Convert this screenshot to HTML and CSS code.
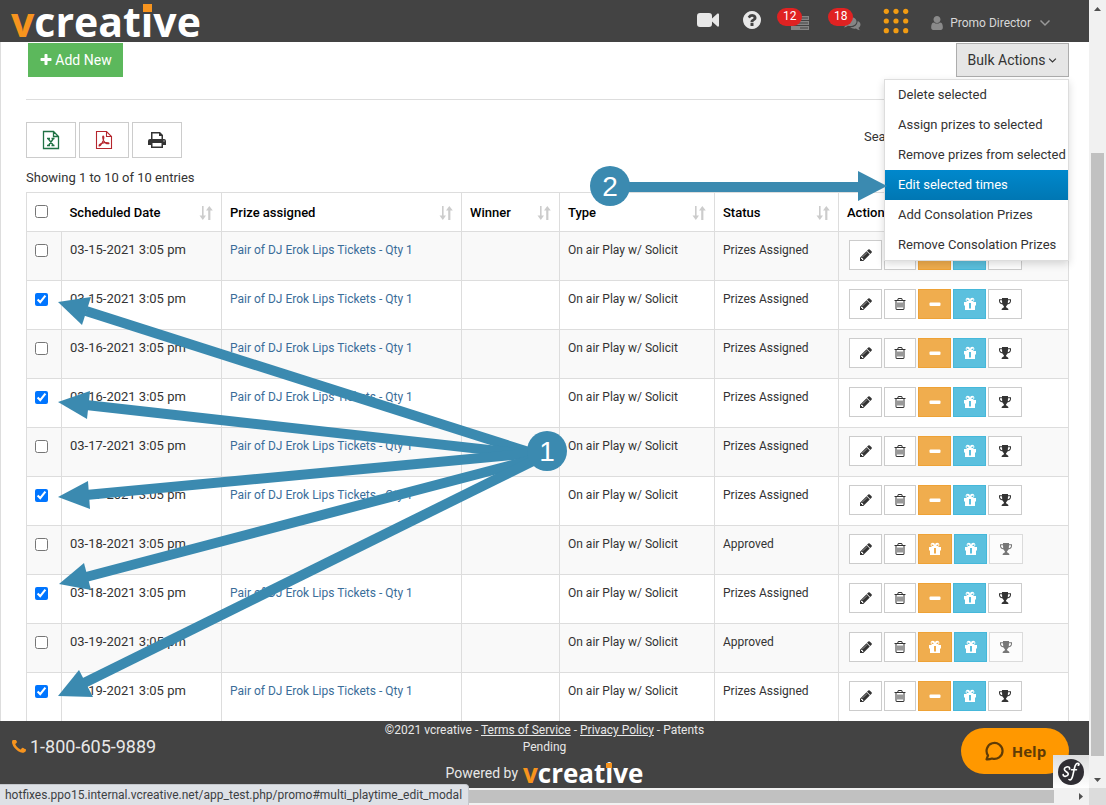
FILE: index.html
```html
<!DOCTYPE html>
<html lang="en">
<head>
<meta charset="utf-8">
<title>vcreative - Promo</title>
<link rel="stylesheet" href="styles.css">
</head>
<body>
<svg class="defs" aria-hidden="true">
<symbol id="plus" viewBox="0 0 1792 1792"><path d="M1600 736v192q0 40-28 68t-68 28h-416v416q0 40-28 68t-68 28h-192q-40 0-68-28t-28-68v-416h-416q-40 0-68-28t-28-68v-192q0-40 28-68t68-28h416v-416q0-40 28-68t68-28h192q40 0 68 28t28 68v416h416q40 0 68 28t28 68z"/></symbol>
<symbol id="pencil" viewBox="0 0 1792 1792"><path d="M491 1536l91-91-235-235-91 91v107h128v128h107zm523-928q0-22-22-22-10 0-17 7l-542 542q-7 7-7 17 0 22 22 22 10 0 17-7l542-542q7-7 7-17zm-54-192l416 416-832 832h-416v-416zm683 96q0 53-37 90l-166 166-416-416 166-165q36-38 90-38 53 0 91 38l235 234q37 39 37 91z"/></symbol>
<symbol id="trash" viewBox="0 0 1792 1792"><path d="M704 736v576q0 14-9 23t-23 9h-64q-14 0-23-9t-9-23v-576q0-14 9-23t23-9h64q14 0 23 9t9 23zm256 0v576q0 14-9 23t-23 9h-64q-14 0-23-9t-9-23v-576q0-14 9-23t23-9h64q14 0 23 9t9 23zm256 0v576q0 14-9 23t-23 9h-64q-14 0-23-9t-9-23v-576q0-14 9-23t23-9h64q14 0 23 9t9 23zm128 724v-948h-896v948q0 22 7 40.5t14.5 27 10.5 8.5h832q3 0 10.5-8.5t14.5-27 7-40.5zm-672-1076h448l-48-117q-7-9-17-11h-317q-10 2-17 11zm928 32v64q0 14-9 23t-23 9h-96v948q0 83-47 143.5t-113 60.5h-832q-66 0-113-58.5t-47-141.5v-952h-96q-14 0-23-9t-9-23v-64q0-14 9-23t23-9h309l70-167q15-37 54-63t79-26h320q40 0 79 26t54 63l70 167h309q14 0 23 9t9 23z"/></symbol>
<symbol id="minus" viewBox="0 0 14 14"><rect x="1.500" y="5.500" width="11" height="3.500" rx="1"/></symbol>
<symbol id="gift" viewBox="0 0 14 14"><path fill-rule="evenodd" d="M1 5h3.200A2.200 2.200 0 1 1 7 2.700 2.200 2.200 0 1 1 9.800 5H13v3.500h-1V13H2V8.500H1zM4 2.200a1 1 0 0 0 0 1.700h2zM10 2.200L8 3.900h2a1 1 0 0 0 0-1.700zM6 6v5.500h2V6z"/></symbol>
<symbol id="trophy" viewBox="0 0 14 14"><path fill-rule="evenodd" d="M4 1h6v1.200h3V4c0 2-1.600 3.200-3.600 3.500C9 8.600 8 9 8 10c0 .8 2.500 1 2.500 3h-7c0-2 2.500-2.200 2.500-3 0-1-1-1.400-1.400-2.500C2.600 7.200 1 6 1 4V2.200h3zM2 3.200V4c0 1 .9 1.900 2.200 2.300L4 3.200zM10 3.200l-.2 3.100C11.100 5.900 12 5 12 4v-.8z"/></symbol>
<symbol id="sort" viewBox="0 0 14 14"><path d="M3 0h1.600v9.500H7L3.800 14 .5 9.500H3zM9.200 14V4.500H7L10.300 0 13.800 4.500h-2.400V14z"/></symbol>
<symbol id="chevron" viewBox="0 0 12 8"><path d="M1.500 1.500L6 6l4.500-4.500" fill="none" stroke="currentColor" stroke-width="1.500"/></symbol>
</svg>

<div class="window">
<div class="page">
<header class="topbar">
<a class="logo" href="#"><span class="logo-v">v</span>creat<span class="logo-i">i</span>ve</a>
<nav class="topnav">
<a href="#" class="nav-video" aria-label="Videos"><svg viewBox="0 0 22 16"><path d="M3 1h9a3 3 0 0 1 3 3v2.500L20.500 1.500q1.500-.5 1.500 1v11q0 1.500-1.500 1L15 9.500V12a3 3 0 0 1-3 3H3a3 3 0 0 1-3-3V4a3 3 0 0 1 3-3z"/></svg></a>
<a href="#" class="nav-help" aria-label="Help"><svg viewBox="128 128 1536 1536"><path d="M1024 1376v-192q0-14-9-23t-23-9h-192q-14 0-23 9t-9 23v192q0 14 9 23t23 9h192q14 0 23-9t9-23zm256-672q0-88-55.500-163t-138.500-116-170-41q-243 0-371 213-15 24 8 42l132 100q7 6 19 6 16 0 25-12 53-68 86-92 34-24 86-24 48 0 85.500 26t37.500 59q0 38-20 61t-68 45q-63 28-115.500 86.500t-52.500 125.500v36q0 14 9 23t23 9h192q14 0 23-9t9-23q0-19 21.500-49.500t54.500-49.500q32-18 49-28.500t46-35 44.500-48 28-60.500 12.500-81zm384 192q0 209-103 385.500t-279.500 279.500-385.500 103-385.500-103-279.500-279.500-103-385.500 103-385.500 279.500-279.500 385.500-103 385.500 103 279.500 279.500 103 385.500z"/></svg></a>
<a href="#" class="nav-tasks" aria-label="Tasks, 12 pending"><svg viewBox="0 0 20 16"><path fill-rule="evenodd" d="M1 1h18v4H1zM11 2.400v1.200h7V2.400zM1 6h18v4H1zM8 7.400v1.200h10V7.400zM1 11h18v4H1zM10 12.400v1.200h8v-1.200z"/></svg><span class="badge">12</span></a>
<a href="#" class="nav-chat" aria-label="Messages, 18 unread"><svg viewBox="0 0 18 15"><path d="M7 1c4 0 6.500 2 6.500 4.500S11 10 7 10q-1 0-2-.2Q3 11.500.8 11.500 2.300 10.300 2.400 8.800.5 7.500.5 5.500.5 3 7 1z"/><path d="M14.800 5c1.700.8 2.700 2 2.700 3.500s-.8 2.500-2 3.300q.3 1.500 1.800 2.500-2.600 0-4.300-1.700-3.500.5-6-1.300 7 0 7.800-6.300z"/></svg><span class="badge">18</span></a>
<a href="#" class="nav-apps" aria-label="Apps"><svg viewBox="0 0 26 26"><circle cx="3.300" cy="3.300" r="2.600"/><circle cx="13" cy="3.300" r="2.600"/><circle cx="22.700" cy="3.300" r="2.600"/><circle cx="3.300" cy="13" r="2.600"/><circle cx="13" cy="13" r="2.600"/><circle cx="22.700" cy="13" r="2.600"/><circle cx="3.300" cy="22.700" r="2.600"/><circle cx="13" cy="22.700" r="2.600"/><circle cx="22.700" cy="22.700" r="2.600"/></svg></a>
<a href="#" class="nav-user"><svg class="user-icon" viewBox="256 128 1280 1536"><path d="M1536 1399q0 109-62.500 187t-150.500 78h-854q-88 0-150.500-78t-62.500-187q0-85 8.500-160.500t31.500-152 58.500-131 94-89 134.500-34.500q131 128 313 128t313-128q76 0 134.500 34.500t94 89 58.500 131 31.500 152 8.500 160.500zm-256-887q0 159-112.500 271.500t-271.500 112.500-271.500-112.500-112.500-271.500 112.500-271.500 271.500-112.500 271.500 112.500 112.500 271.500z"/></svg><span>Promo Director</span><svg class="chev"><use href="#chevron"/></svg></a>
</nav>
</header>

<main class="content">
<div class="toolbar">
<button class="add" type="button"><svg><use href="#plus"/></svg>Add New</button>
<div class="bulk">
<button class="bulk-toggle" type="button" aria-expanded="true">Bulk Actions<svg><use href="#chevron"/></svg></button>
<ul class="menu">
<li><a href="#">Delete selected</a></li>
<li><a href="#">Assign prizes to selected</a></li>
<li><a href="#">Remove prizes from selected</a></li>
<li><a href="#multi_playtime_edit_modal" class="current">Edit selected times</a></li>
<li><a href="#">Add Consolation Prizes</a></li>
<li><a href="#">Remove Consolation Prizes</a></li>
</ul>
</div>
</div>
<div class="tools">
<div class="exports">
<button type="button" class="excel" aria-label="Export to Excel"><svg viewBox="0 0 18 20"><path d="M1.500 1.500h10l5 5v12h-15zM11.500 1.500v5h5M5 8.500h3M9.500 8.500h3M5 15.500h3M9.500 15.500h3M6 8.500l5.500 7M11.500 8.500l-5 7" fill="none" stroke="currentColor" stroke-width="1.300"/></svg></button>
<button type="button" class="pdf" aria-label="Export to PDF"><svg viewBox="0 0 18 20"><path d="M1.500 1.500h10l5 5v12h-15zM11.500 1.500v5h5M8.200 6c-.8 0-.6 2.500.3 4.500 1 2 2.800 3.500 5 3.300 1.500-.6-1-1.600-4-1.200-2.500.3-5.800 1.700-5.500 3.200.8 1 2.800-2 4-4.800C9 8.500 9 6.500 8.200 6z" fill="none" stroke="currentColor" stroke-width="1.100"/></svg></button>
<button type="button" aria-label="Print"><svg viewBox="0 0 18 18"><path fill-rule="evenodd" d="M3 1h9l3 3v4h1q2 0 2 2v4h-3v3H3v-3H0v-4q0-2 2-2h1zM4.500 2.500V8h9V5H11V2.500zM4.500 12v3.500h9V12zM15.500 9.500v1h1v-1z"/></svg></button>
</div>
<label class="search">Search:<input type="search"></label>
</div>
<p class="info">Showing 1 to 10 of 10 entries</p>

<table>
<colgroup><col class="c-check"><col class="c-date"><col class="c-prize"><col class="c-winner"><col class="c-type"><col class="c-status"><col></colgroup>
<thead>
<tr>
<th class="select"><input type="checkbox" aria-label="Select all"></th>
<th class="date"><div>Scheduled Date<svg><use href="#sort"/></svg></div></th>
<th><div>Prize assigned<svg><use href="#sort"/></svg></div></th>
<th><div>Winner<svg><use href="#sort"/></svg></div></th>
<th><div>Type<svg><use href="#sort"/></svg></div></th>
<th><div>Status<svg><use href="#sort"/></svg></div></th>
<th>Actions</th>
</tr>
</thead>
<tbody>
<tr><td class="select"><input type="checkbox" aria-label="Select row 1"></td><td>03-15-2021 3:05 pm</td><td><a href="#">Pair of DJ Erok Lips Tickets - Qty 1</a></td><td></td><td>On air Play w/ Solicit</td><td>Prizes Assigned</td>
<td><div class="actions"><button aria-label="Edit"><svg><use href="#pencil"/></svg></button><button class="del" aria-label="Delete"><svg><use href="#trash"/></svg></button><button class="warn" aria-label="Remove prize"><svg><use href="#minus"/></svg></button><button class="gift" aria-label="Consolation prize"><svg><use href="#gift"/></svg></button><button class="win" aria-label="Winner"><svg><use href="#trophy"/></svg></button></div></td></tr>
<tr><td class="select"><input type="checkbox" checked aria-label="Select row 2"></td><td>03-15-2021 3:05 pm</td><td><a href="#">Pair of DJ Erok Lips Tickets - Qty 1</a></td><td></td><td>On air Play w/ Solicit</td><td>Prizes Assigned</td>
<td><div class="actions"><button aria-label="Edit"><svg><use href="#pencil"/></svg></button><button class="del" aria-label="Delete"><svg><use href="#trash"/></svg></button><button class="warn" aria-label="Remove prize"><svg><use href="#minus"/></svg></button><button class="gift" aria-label="Consolation prize"><svg><use href="#gift"/></svg></button><button class="win" aria-label="Winner"><svg><use href="#trophy"/></svg></button></div></td></tr>
<tr><td class="select"><input type="checkbox" aria-label="Select row 3"></td><td>03-16-2021 3:05 pm</td><td><a href="#">Pair of DJ Erok Lips Tickets - Qty 1</a></td><td></td><td>On air Play w/ Solicit</td><td>Prizes Assigned</td>
<td><div class="actions"><button aria-label="Edit"><svg><use href="#pencil"/></svg></button><button class="del" aria-label="Delete"><svg><use href="#trash"/></svg></button><button class="warn" aria-label="Remove prize"><svg><use href="#minus"/></svg></button><button class="gift" aria-label="Consolation prize"><svg><use href="#gift"/></svg></button><button class="win" aria-label="Winner"><svg><use href="#trophy"/></svg></button></div></td></tr>
<tr><td class="select"><input type="checkbox" checked aria-label="Select row 4"></td><td>03-16-2021 3:05 pm</td><td><a href="#">Pair of DJ Erok Lips Tickets - Qty 1</a></td><td></td><td>On air Play w/ Solicit</td><td>Prizes Assigned</td>
<td><div class="actions"><button aria-label="Edit"><svg><use href="#pencil"/></svg></button><button class="del" aria-label="Delete"><svg><use href="#trash"/></svg></button><button class="warn" aria-label="Remove prize"><svg><use href="#minus"/></svg></button><button class="gift" aria-label="Consolation prize"><svg><use href="#gift"/></svg></button><button class="win" aria-label="Winner"><svg><use href="#trophy"/></svg></button></div></td></tr>
<tr><td class="select"><input type="checkbox" aria-label="Select row 5"></td><td>03-17-2021 3:05 pm</td><td><a href="#">Pair of DJ Erok Lips Tickets - Qty 1</a></td><td></td><td>On air Play w/ Solicit</td><td>Prizes Assigned</td>
<td><div class="actions"><button aria-label="Edit"><svg><use href="#pencil"/></svg></button><button class="del" aria-label="Delete"><svg><use href="#trash"/></svg></button><button class="warn" aria-label="Remove prize"><svg><use href="#minus"/></svg></button><button class="gift" aria-label="Consolation prize"><svg><use href="#gift"/></svg></button><button class="win" aria-label="Winner"><svg><use href="#trophy"/></svg></button></div></td></tr>
<tr><td class="select"><input type="checkbox" checked aria-label="Select row 6"></td><td>03-17-2021 3:05 pm</td><td><a href="#">Pair of DJ Erok Lips Tickets - Qty 1</a></td><td></td><td>On air Play w/ Solicit</td><td>Prizes Assigned</td>
<td><div class="actions"><button aria-label="Edit"><svg><use href="#pencil"/></svg></button><button class="del" aria-label="Delete"><svg><use href="#trash"/></svg></button><button class="warn" aria-label="Remove prize"><svg><use href="#minus"/></svg></button><button class="gift" aria-label="Consolation prize"><svg><use href="#gift"/></svg></button><button class="win" aria-label="Winner"><svg><use href="#trophy"/></svg></button></div></td></tr>
<tr><td class="select"><input type="checkbox" aria-label="Select row 7"></td><td>03-18-2021 3:05 pm</td><td></td><td></td><td>On air Play w/ Solicit</td><td>Approved</td>
<td><div class="actions"><button aria-label="Edit"><svg><use href="#pencil"/></svg></button><button class="del" aria-label="Delete"><svg><use href="#trash"/></svg></button><button class="warn assign" aria-label="Assign prize"><svg><use href="#gift"/></svg></button><button class="gift" aria-label="Consolation prize"><svg><use href="#gift"/></svg></button><button class="win" disabled aria-label="Winner"><svg><use href="#trophy"/></svg></button></div></td></tr>
<tr><td class="select"><input type="checkbox" checked aria-label="Select row 8"></td><td>03-18-2021 3:05 pm</td><td><a href="#">Pair of DJ Erok Lips Tickets - Qty 1</a></td><td></td><td>On air Play w/ Solicit</td><td>Prizes Assigned</td>
<td><div class="actions"><button aria-label="Edit"><svg><use href="#pencil"/></svg></button><button class="del" aria-label="Delete"><svg><use href="#trash"/></svg></button><button class="warn" aria-label="Remove prize"><svg><use href="#minus"/></svg></button><button class="gift" aria-label="Consolation prize"><svg><use href="#gift"/></svg></button><button class="win" aria-label="Winner"><svg><use href="#trophy"/></svg></button></div></td></tr>
<tr><td class="select"><input type="checkbox" aria-label="Select row 9"></td><td>03-19-2021 3:05 pm</td><td></td><td></td><td>On air Play w/ Solicit</td><td>Approved</td>
<td><div class="actions"><button aria-label="Edit"><svg><use href="#pencil"/></svg></button><button class="del" aria-label="Delete"><svg><use href="#trash"/></svg></button><button class="warn assign" aria-label="Assign prize"><svg><use href="#gift"/></svg></button><button class="gift" aria-label="Consolation prize"><svg><use href="#gift"/></svg></button><button class="win" disabled aria-label="Winner"><svg><use href="#trophy"/></svg></button></div></td></tr>
<tr><td class="select"><input type="checkbox" checked aria-label="Select row 10"></td><td>03-19-2021 3:05 pm</td><td><a href="#">Pair of DJ Erok Lips Tickets - Qty 1</a></td><td></td><td>On air Play w/ Solicit</td><td>Prizes Assigned</td>
<td><div class="actions"><button aria-label="Edit"><svg><use href="#pencil"/></svg></button><button class="del" aria-label="Delete"><svg><use href="#trash"/></svg></button><button class="warn" aria-label="Remove prize"><svg><use href="#minus"/></svg></button><button class="gift" aria-label="Consolation prize"><svg><use href="#gift"/></svg></button><button class="win" aria-label="Winner"><svg><use href="#trophy"/></svg></button></div></td></tr>
</tbody>
</table>
</main>

<footer class="footer">
<div class="phone"><svg viewBox="192 256 1408 1408"><path d="M1600 1240q0 27-10 70.500t-21 68.500q-21 50-122 106-94 51-186 51-27 0-52.500-3.500t-57.500-12.500-47.500-14.500-55.500-20.500-49-18q-98-35-175-83-128-79-264.500-215.500t-215.500-264.500q-48-77-83-175-3-9-18-49t-20.500-55.500-14.500-47.500-12.500-57.500-3.500-52.500q0-92 51-186 56-101 106-122 25-11 68.500-21t70.500-10q14 0 21 3 18 6 53 76 11 19 30 54t35 63.500 31 53.500q3 4 17.500 25t21.500 35.500 7 28.500q0 20-28.500 50t-62 55-62 53-28.500 46q0 9 5 22.500t8.500 20.500 14 24 11.500 19q76 137 174 235t235 174q2 1 19 11.500t24 14 20.500 8.500 22.500 5q18 0 46-28.500t53-62 55-62 50-28.500q14 0 28.500 7t35.500 21.500 25 17.500q25 15 53.500 31t63.500 35 54 30q70 35 76 53 3 7 3 21z"/></svg>1-800-605-9889</div>
<div class="legal">
<p>©2021 vcreative - <a href="#">Terms of Service</a> - <a href="#">Privacy Policy</a> - Patents Pending</p>
<div class="powered">Powered by <span class="logo small"><span class="logo-v">v</span>creat<span class="logo-i">i</span>ve</span></div>
</div>
<div></div>
</footer>
<button class="help" type="button"><svg viewBox="0 0 20 20"><path d="M2.500 18.300L4 14.500A8 8 0 1 1 8 17.500q-2.500 1-5.500.8z" fill="none" stroke="currentColor" stroke-width="2.200" stroke-linejoin="round"/></svg>Help</button>
<a class="sf" href="#" aria-label="Symfony profiler"><svg viewBox="0 0 26 26"><circle cx="13" cy="13" r="13" fill="#2f2d33"/><path d="M11.500 10c.5-1.500-1-2.600-3-2C6 8.800 5.500 11 8 12.500s3 2.800 1.200 4.200c-1.700 1.200-4.400.5-4-1.200M11 20.500c1.500 1.200 3-.2 3.800-4l1.700-7.500c.8-3.800 2.500-5.500 4-4.500.8.600.5 1.700-.3 1.600M13.500 10.800h5" fill="none" stroke="#fff" stroke-width="1.600" stroke-linecap="round"/></svg></a>
</div>
<div class="vscroll"><svg viewBox="0 0 17 17"><path d="M5 11l3.500-4 3.500 4z"/></svg><div class="vthumb"></div><svg viewBox="0 0 17 17"><path d="M5 7l3.500 4L12 7z"/></svg></div>
<div class="hscroll"><div class="hthumb"></div><svg viewBox="0 0 17 17"><path d="M7 5l4 3.500L7 12z"/></svg></div>
<div class="corner"></div>
<div class="status">hotfixes.ppo15.internal.vcreative.net/app_test.php/promo#multi_playtime_edit_modal</div>
<svg class="callouts" viewBox="0 0 1106 805">
<g stroke="#3b8ab0" stroke-width="10" fill="none">
<path d="M535 454L86 311"/><path d="M535 455L86 405"/><path d="M535 453L86 495"/><path d="M535 459L86 577"/><path d="M535 460L84 683"/><path d="M625 187H860"/>
</g>
<g fill="#3b8ab0">
<path d="M58 302L91 297L82 325z"/><path d="M58 402L90 391L87 419z"/><path d="M58 497L88 481L90 509z"/><path d="M59 584L84 563L91 590z"/><path d="M58 696L79 670L93 697z"/><path d="M887 186L858 171V201z"/>
<circle cx="547" cy="451" r="20"/><circle cx="610" cy="186" r="20"/>
</g>
<g class="callout-text"><text x="547" y="461">1</text><text x="610" y="196">2</text></g>
</svg>
</div>
</body>
</html>
```
FILE: styles.css
```css
* { box-sizing: border-box; }
body { margin: 0; font: 13px/20px Roboto, "Open Sans", sans-serif; color: #333; }
a { text-decoration: none; color: inherit; }
button { font: inherit; color: inherit; margin: 0; padding: 0; cursor: pointer; }
svg { display: block; fill: currentColor; }
.defs { position: absolute; width: 0; height: 0; }

.window { position: relative; height: 100vh; display: grid; grid-template-columns: 1fr 17px; grid-template-rows: minmax(0, 1fr) 17px; overflow: hidden; }
.page { position: relative; display: flex; flex-direction: column; min-width: 0; min-height: 0; background: #fff; border-left: 1px solid #ddd; }

.topbar { flex: none; height: 42px; margin-left: -1px; padding: 0 38px 0 11px; display: flex; align-items: center; justify-content: space-between; background: #434343; color: #e8e8e8; z-index: 1; }
.logo { font: bold 41px/42px "Open Sans", sans-serif; color: #fff; }
.logo-v { color: #f7941e; }
.logo-i { position: relative; }
.logo-i::after { content: ""; position: absolute; left: 2px; top: 11px; width: 9px; height: 8px; background: #f7941e; }
.topnav { display: flex; align-items: center; height: 42px; }
.nav-video, .nav-help, .nav-tasks, .nav-chat { margin-bottom: 3px; }
.nav-video svg { width: 22px; height: 16px; }
.nav-help { margin-left: 24px; }
.nav-help svg { width: 18px; height: 18px; }
.nav-tasks, .nav-chat { position: relative; width: 33px; height: 23px; display: flex; align-items: flex-end; justify-content: flex-end; color: #858585; }
.nav-tasks { margin-left: 16px; }
.nav-chat { margin-left: 18px; }
.nav-tasks svg { width: 20px; height: 16px; }
.nav-chat svg { width: 18px; height: 15px; }
.badge { position: absolute; left: 0; top: 0; width: 25px; height: 18px; border-radius: 9px; background: #e02222; color: #fff; font-size: 12px; line-height: 17px; text-align: center; }
.nav-apps { margin-left: 22px; color: #f39c12; }
.nav-apps svg { width: 26px; height: 26px; }
.nav-user { display: flex; align-items: center; margin: 3px 0 0 22px; font-size: 12px; line-height: 22px; color: #d8d8d8; }
.user-icon { width: 12px; height: 14px; margin-right: 7px; color: #8a8a8a; }
.chev { width: 12px; height: 8px; margin-left: 8px; color: #999; }

.content { flex: 1; min-height: 0; padding: 1px 20px 0 25px; overflow: hidden; }
.toolbar { display: flex; justify-content: space-between; padding: 0 0 22px 2px; border-bottom: 1px solid #ddd; font-size: 14px; }
.add { display: flex; align-items: center; justify-content: center; gap: 2px; width: 95px; height: 34px; background: #5cb85c; border: 0; color: #fff; }
.add svg { width: 14px; height: 14px; }
.bulk { position: relative; }
.bulk-toggle { display: flex; align-items: center; justify-content: center; gap: 3px; width: 113px; height: 34px; background: #e6e6e6; border: 1px solid #adadad; }
.bulk-toggle svg { width: 9px; height: 7px; }
.menu { position: absolute; right: 0; top: 36px; z-index: 2; width: 185px; margin: 0; padding: 0; list-style: none; background: #fff; border: 1px solid #ddd; box-shadow: 0 3px 8px rgba(0, 0, 0, .15); font-size: 13px; line-height: 30px; white-space: nowrap; }
.menu a { display: block; padding-left: 13px; }
.menu .current { background: linear-gradient(#08c, #0077b3); color: #fff; }
.tools { display: flex; justify-content: space-between; align-items: flex-start; padding-top: 22px; }
.exports { display: flex; gap: 3px; }
.exports button { display: flex; align-items: center; justify-content: center; width: 50px; height: 36px; background: #fff; border: 1px solid #ccc; }
.exports svg { width: 18px; height: 20px; }
.exports .excel { color: #207245; }
.exports .pdf { color: #b5262d; }
.search { display: flex; align-items: center; gap: 6px; height: 30px; }
.search input { width: 156px; height: 30px; border: 1px solid #ccc; }
.info { margin: 10px 0 4px; }

table { width: 100%; table-layout: fixed; border-collapse: collapse; }
.c-check { width: 35px; }
.c-date { width: 160px; }
.c-prize { width: 240px; }
.c-winner { width: 98px; }
.c-type { width: 155px; }
.c-status { width: 124px; }
th, td { border: 1px solid #ddd; padding: 8px; text-align: left; vertical-align: top; }
th { height: 39px; padding: 10px 8px 8px; font-weight: 500; color: #000; }
td { font-size: 12px; }
td:nth-child(2) { font-size: 13px; }
th div { display: flex; justify-content: space-between; align-items: center; }
th svg { width: 14px; height: 14px; color: #ccc; }
th.select { border-right: 0; }
th.date { border-left: 0; }
tbody tr { height: 49px; }
tbody tr:nth-child(odd) { background: #f9f9f9; }
td a { color: #3a6d99; }
td:last-child { padding: 8px 10px; }
.select input { display: block; width: 13px; height: 13px; margin: 4px 0; }
th.select input { margin: 2px 0; }
.actions { display: flex; gap: 2px; }
.actions button { display: flex; align-items: center; justify-content: center; width: 33px; height: 30px; background: #fff; border: 1px solid #ccc; }
.actions .del { width: 32px; }
.actions .warn { background: #f0ad4e; border-color: #eea236; color: #fff; }
.actions .assign { width: 34px; }
.actions .gift { background: #5bc0de; border-color: #46b8da; color: #fff; }
.actions .win { width: 34px; }
.actions button:disabled { opacity: .65; }
.actions svg { width: 14px; height: 14px; }

.footer { flex: none; height: 67px; margin-left: -1px; padding: 0 12px; display: grid; grid-template-columns: 1fr 320px 1fr; background: #434343; color: #e8e8e8; z-index: 1; }
.phone { display: flex; align-items: center; gap: 4px; height: 52px; font-size: 18px; }
.phone svg { width: 14px; height: 14px; color: #f7941e; }
.legal { text-align: center; font-size: 12px; line-height: 17px; }
.legal p { margin: 0; padding-top: 1px; }
.legal a { text-decoration: underline; }
.powered { display: flex; justify-content: center; align-items: center; gap: 5px; height: 34px; font-size: 14px; }
.logo.small { font-size: 26px; line-height: 30px; }
.small .logo-i::after { left: 1px; top: 8px; width: 6px; height: 5px; }
.help { position: absolute; right: 20px; bottom: 14px; z-index: 2; display: flex; align-items: center; justify-content: center; gap: 8px; width: 108px; height: 46px; border: 0; border-radius: 23px; background: #ff9800; color: #5e3b06; font: bold 15px/20px "Open Sans", sans-serif; }
.help svg { width: 20px; height: 20px; }
.sf { position: absolute; right: 0; bottom: 0; z-index: 3; display: flex; align-items: center; justify-content: center; width: 36px; height: 33px; background: linear-gradient(#ddd, #fff); }
.sf svg { width: 26px; height: 26px; }

.vscroll { display: flex; flex-direction: column; align-items: center; background: #f1f1f1; color: #505050; }
.vscroll svg { width: 17px; height: 17px; }
.vthumb { flex: 1; width: 13px; margin: 136px 0 15px; background: #c1c1c1; }
.hscroll { display: flex; align-items: center; background: #f1f1f1; color: #505050; }
.hscroll svg { width: 17px; height: 17px; }
.hthumb { flex: 1; height: 13px; margin-right: 18px; background: #c1c1c1; }
.corner { background: #dcdcdc; }
.status { position: absolute; left: 0; bottom: 0; z-index: 4; height: 21px; padding: 0 6px 0 5px; background: #dee1e6; border-top: 1px solid #c4c7cc; border-right: 1px solid #c4c7cc; border-top-right-radius: 4px; color: #3c4043; font: 12px/20px Roboto, sans-serif; white-space: nowrap; }
.callouts { position: absolute; left: 0; top: 0; z-index: 5; width: 1106px; height: 805px; pointer-events: none; }
.callout-text { fill: #fff; font: 28px "Liberation Sans", sans-serif; text-anchor: middle; }
```
